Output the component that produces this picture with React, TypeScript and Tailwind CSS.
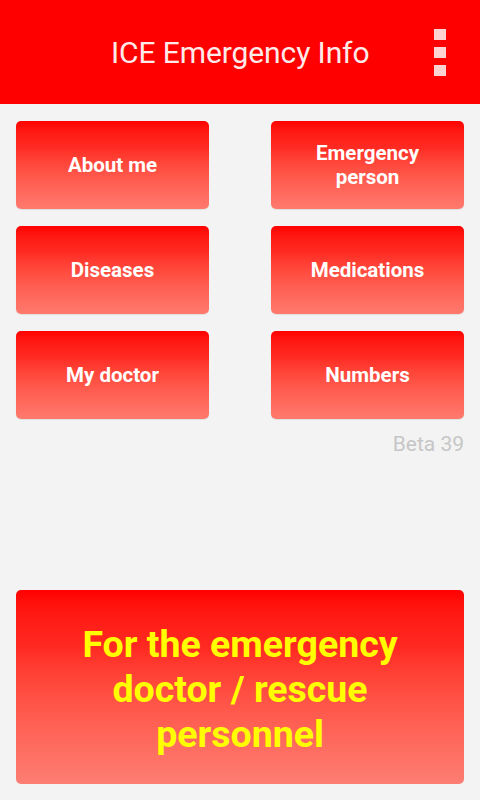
const items = [
  ['About me'],
  ['Emergency', 'person'],
  ['Diseases'],
  ['Medications'],
  ['My doctor'],
  ['Numbers'],
];

function MenuDots() {
  return (
    <div className="flex flex-col gap-[7px]">
      <span className="block w-[12px] h-[11px] bg-[#ffd2d2]" />
      <span className="block w-[12px] h-[11px] bg-[#ffd2d2]" />
      <span className="block w-[12px] h-[11px] bg-[#ffd2d2]" />
    </div>
  );
}

export default function App() {
  return (
    <div
      className="w-[480px] h-[800px] flex flex-col bg-[#f3f3f3]"
      style={{ fontFamily: 'Roboto, "Liberation Sans", sans-serif' }}
    >
      <header className="h-[104px] bg-[#ff0000] flex items-center justify-between shrink-0 pl-[111px] pr-[34px]">
        <h1 className="text-[30px] text-[#ffeaea] tracking-[-0.1px]">ICE Emergency Info</h1>
        <MenuDots />
      </header>

      <main className="flex-1 flex flex-col px-4 pb-4">
        <div className="grid grid-cols-2 gap-x-[62px] gap-y-[17px] mt-[17px]">
          {items.map((lines) => (
            <button
              key={lines.join(' ')}
              className="h-[88px] rounded-[5px] bg-gradient-to-b from-[#ff0000] via-[#ff2a22] via-30% to-[#ff7a6e] flex flex-col items-center justify-center text-white font-bold text-[20.5px] leading-[24px] shadow-[0_1px_1px_rgba(0,0,0,0.08)]"
            >
              {lines.map((l) => (
                <span key={l}>{l}</span>
              ))}
            </button>
          ))}
        </div>
        <p className="text-right text-[21px] text-[#c6c6c6] mt-[10px]">Beta 39</p>
        <div className="flex-1" />
        <button className="h-[194px] rounded-[5px] bg-gradient-to-b from-[#ff0000] via-[#ff2a22] via-30% to-[#fd7d72] flex flex-col items-center justify-center text-[#ffff00] font-bold text-[37.5px] leading-[45px] pt-[4px]">
          <span>For the emergency</span>
          <span>doctor / rescue</span>
          <span>personnel</span>
        </button>
      </main>
    </div>
  );
}
